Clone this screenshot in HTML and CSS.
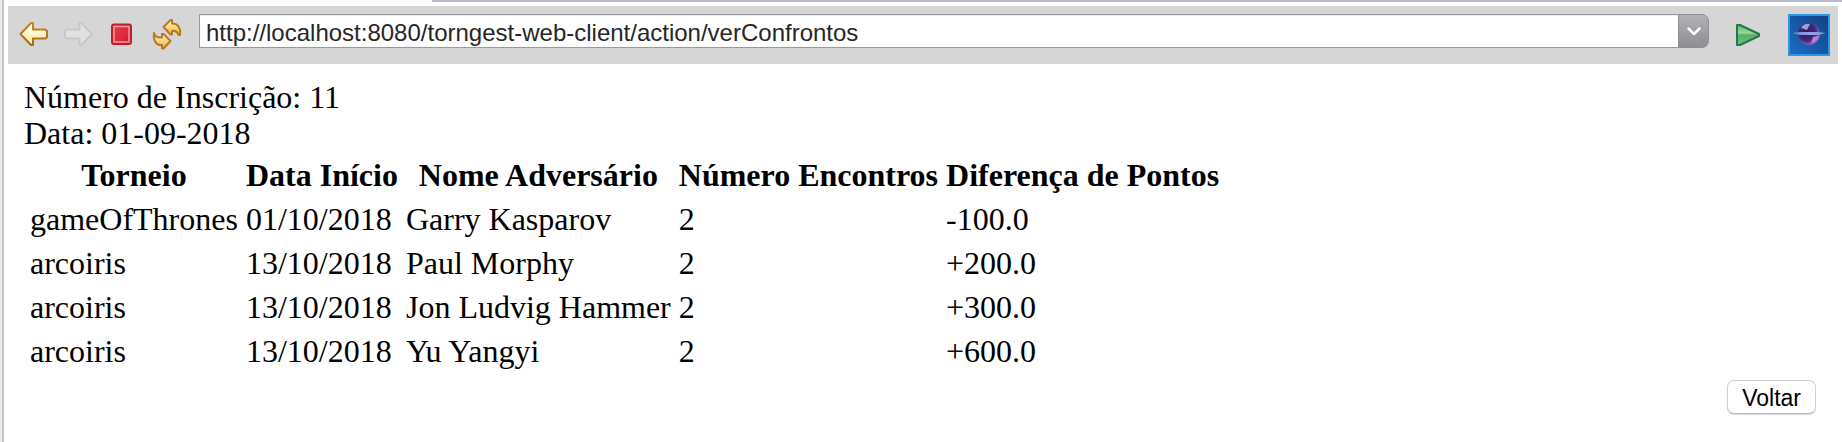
FILE: index.html
```html
<!DOCTYPE html>
<html lang="pt">
<head>
<meta charset="utf-8">
<title>Confrontos</title>
<link rel="stylesheet" href="styles.css">
</head>
<body>
<div class="pane">
  <div class="tab-edge"></div>
  <header class="toolbar">
    <button class="tool" type="button" aria-label="Back">
      <svg width="30" height="40" viewBox="0 0 30 40">
        <defs>
          <linearGradient id="gold" x1="0" y1="0" x2="0" y2="1"><stop offset="0.1" stop-color="#fffef2"/><stop offset="0.9" stop-color="#ffe9a0"/></linearGradient>
          <linearGradient id="goldEdge" x1="0" y1="0" x2="0" y2="1"><stop offset="0" stop-color="#c48422"/><stop offset="1" stop-color="#a96a16"/></linearGradient>
        </defs>
        <path d="M1.500 20 12 9H14V15.500H26.500L28 17V23L26.500 24.500H14V31H12Z" fill="url(#gold)" stroke="url(#goldEdge)" stroke-width="2" stroke-linejoin="round"/>
      </svg>
    </button>
    <button class="tool" type="button" aria-label="Forward">
      <svg width="30" height="40" viewBox="0 0 30 40">
        <path d="M28 20 17.5 9H15.5V15.5H2.5L1 17V23L2.5 24.5H15.5V31H17.5Z" fill="#e0e0e0" stroke="#c8c8c8" stroke-width="2" stroke-linejoin="round"/>
      </svg>
    </button>
    <button class="tool" type="button" aria-label="Stop">
      <svg width="30" height="40" viewBox="0 0 30 40">
        <defs><linearGradient id="red" x1="0" y1="0" x2="1" y2="1"><stop offset="0" stop-color="#e83a46"/><stop offset="0.6" stop-color="#dc2b3a"/><stop offset="1" stop-color="#bd1824"/></linearGradient></defs>
        <rect x="3" y="10.500" width="19" height="19.500" rx="2" fill="url(#red)" stroke="#bd2029" stroke-width="2"/>
        <rect x="5" y="12.500" width="15" height="15.500" fill="none" stroke="#f0989c" stroke-width="1.500"/>
      </svg>
    </button>
    <button class="tool" type="button" aria-label="Refresh">
      <svg width="30" height="40" viewBox="0 0 30 40">
        <defs><linearGradient id="amber" x1="0" y1="0" x2="0" y2="1"><stop offset="0.1" stop-color="#fff0b4"/><stop offset="1" stop-color="#efb343"/></linearGradient></defs>
        <g fill="url(#amber)" stroke="#b67a20" stroke-width="2" stroke-linejoin="round">
          <path d="M9.5 13 16.5 6H18V9.5C23 9 27 13 26 21H24.5C23.5 18 21 16.5 18 17V20.5H16.5Z"/>
          <path d="M0 19C1 23 4 24 8 23.5V20H9.5L16.5 27 9.5 34.5H8V31C2 32 -1 26 0 19Z"/>
        </g>
      </svg>
    </button>
    <form class="address">
      <input class="address-field" type="text" aria-label="Address" value="http://localhost:8080/torngest-web-client/action/verConfrontos">
      <button class="address-drop" type="button" aria-label="Show history">
        <svg width="14" height="9" viewBox="0 0 14 9"><path d="M1.5 1.5 7 7 12.5 1.5" fill="none" stroke="#fff" stroke-width="2.500" stroke-linecap="round" stroke-linejoin="round"/></svg>
      </button>
    </form>
    <button class="tool go" type="button" aria-label="Go">
      <svg width="30" height="40" viewBox="0 0 30 40">
        <defs><linearGradient id="green" x1="0" y1="0" x2="0" y2="1"><stop offset="0" stop-color="#5fb878"/><stop offset="0.4" stop-color="#9ad694"/><stop offset="0.5" stop-color="#59ae66"/><stop offset="1" stop-color="#70c080"/></linearGradient></defs>
        <path d="M4 11H7L26 20V22L7 31H4Z" fill="url(#green)" stroke="#1c7a4c" stroke-width="2" stroke-linejoin="round"/>
      </svg>
    </button>
    <svg class="brand" width="42" height="42" viewBox="0 0 42 42" role="img" aria-label="Browser">
      <defs>
        <linearGradient id="sky" x1="0" y1="1" x2="1" y2="0"><stop offset="0" stop-color="#1c6fc4"/><stop offset="0.5" stop-color="#1757a5"/><stop offset="1" stop-color="#124086"/></linearGradient>
        <radialGradient id="orb" cx="0.4" cy="0.4" r="0.65"><stop offset="0" stop-color="#2b1c5e"/><stop offset="0.6" stop-color="#3c2878"/><stop offset="1" stop-color="#9b6fd0"/></radialGradient>
        <linearGradient id="ring" x1="0" y1="0" x2="1" y2="0"><stop offset="0" stop-color="#6088d0"/><stop offset="0.5" stop-color="#9b9bea"/><stop offset="1" stop-color="#7d9bdc"/></linearGradient>
      </defs>
      <rect x="1" y="1" width="40" height="40" fill="url(#sky)" stroke="#2f96e2" stroke-width="2"/>
      <circle cx="21" cy="20" r="11" fill="url(#orb)"/>
      <path d="M13 14C15 10 19 9 22 10L19 16Z" fill="#a69ad4"/>
      <path d="M23 29C28 28 30 25 31 22L25 23Z" fill="#c07ddd"/>
      <path d="M4 19 12 18H30L38 19 30 21H12Z" fill="url(#ring)"/>
    </svg>
  </header>

  <main class="page">
    <div>Número de Inscrição: 11</div>
    <div>Data: 01-09-2018</div>
    <table class="matches">
      <thead>
        <tr><th>Torneio</th><th>Data Início</th><th>Nome Adversário</th><th>Número Encontros</th><th>Diferença de Pontos</th></tr>
      </thead>
      <tbody>
        <tr><td>gameOfThrones</td><td>01/10/2018</td><td>Garry Kasparov</td><td>2</td><td>-100.0</td></tr>
        <tr><td>arcoiris</td><td>13/10/2018</td><td>Paul Morphy</td><td>2</td><td>+200.0</td></tr>
        <tr><td>arcoiris</td><td>13/10/2018</td><td>Jon Ludvig Hammer</td><td>2</td><td>+300.0</td></tr>
        <tr><td>arcoiris</td><td>13/10/2018</td><td>Yu Yangyi</td><td>2</td><td>+600.0</td></tr>
      </tbody>
    </table>
    <div class="actions"><button class="back" type="button">Voltar</button></div>
  </main>
</div>
</body>
</html>
```
FILE: styles.css
```css
* {
  box-sizing: border-box;
}

body {
  margin: 0;
  background: #fff;
  color: #000;
}

.pane {
  min-height: 100vh;
  border-left: 2px solid #ebebe8;
  box-shadow: inset 2px 0 #c5c5be;
}

.tab-edge {
  height: 2px;
  margin-left: 430px;
  background: #b8bbce;
}

.toolbar {
  display: flex;
  align-items: flex-start;
  gap: 15px;
  height: 58px;
  margin: 4px 4px 0 6px;
  padding: 8px 8px 0 11px;
  background: #d6d6d6;
}

.tool {
  flex: none;
  width: 30px;
  height: 40px;
  padding: 0;
  border: 0;
  background: none;
}

.tool svg,
.brand,
.address-drop svg {
  display: block;
  overflow: visible;
}

.brand {
  flex: none;
}

.go {
  margin: 0 10px 0 9px;
}

.address {
  display: flex;
  flex: 1;
  height: 34px;
  margin: 0;
}

.address-field {
  flex: 1;
  min-width: 0;
  padding: 4px 6px 0;
  border: 1px solid #999;
  border-right: 0;
  border-radius: 0;
  outline: 0;
  background: #fff;
  box-shadow: inset 0 1px #eee;
  color: #262626;
  font: 24px/28px "Liberation Sans", Arial, sans-serif;
}

.address-drop {
  display: grid;
  place-items: center;
  width: 31px;
  padding: 0;
  border: 1px solid #8e8e92;
  border-radius: 0 7px 7px 0;
  background: linear-gradient(#b2b2b6, #8d8d92);
}

.page {
  padding: 15px 26px 0 22px;
  font: 32px/36px "Liberation Serif", "Times New Roman", serif;
}

.matches {
  border-spacing: 4px;
}

.matches th,
.matches td {
  padding: 2px;
  text-align: left;
  white-space: nowrap;
}

.matches th {
  text-align: center;
}

.actions {
  display: flex;
  justify-content: flex-end;
  padding-top: 5px;
}

.back {
  height: 34px;
  padding: 2px 14px 0;
  border: 1px solid #d0d0d0;
  border-bottom-color: #b8b8b8;
  border-radius: 7px;
  background: #fff;
  box-shadow: 0 1px 1px #ddd;
  color: #000;
  font: 23px/30px "Liberation Sans", Arial, sans-serif;
}
```
